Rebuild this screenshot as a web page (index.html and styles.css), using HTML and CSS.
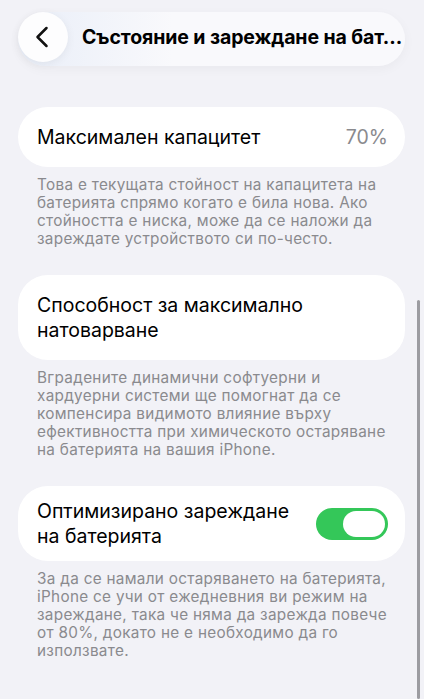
FILE: index.html
```html
<!DOCTYPE html>
<html lang="bg">
<head>
  <meta charset="UTF-8" />
  <meta name="viewport" content="width=device-width, initial-scale=1.0"/>
  <title>Състояние и зареждане на батерията</title>
  <link rel="stylesheet" href="styles.css">
</head>
<body>
  <header class="nav">
    <button class="back" aria-label="Назад">
      <svg width="14" height="22" viewBox="0 0 14 22">
        <path d="M11.5 2 L2.5 11 L11.5 20" fill="none" stroke="#111" stroke-width="2.5" stroke-linecap="round" stroke-linejoin="round"/>
      </svg>
    </button>
    <h1 class="title">Състояние и зареждане на бат...</h1>
  </header>

  <main class="content">
    <section class="group">
      <div class="card row">
        <span class="label">Максимален капацитет</span>
        <span class="value">70%</span>
      </div>
      <p class="note">Това е текущата стойност на капацитета на<br>батерията спрямо когато е била нова. Ако<br>стойността е ниска, може да се наложи да<br>зареждате устройството си по-често.</p>
    </section>

    <section class="group">
      <div class="card tall">
        <span class="label">Способност за максимално натоварване</span>
      </div>
      <p class="note">Вградените динамични софтуерни и<br>хардуерни системи ще помогнат да се<br>компенсира видимото влияние върху<br>ефективността при химическото остаряване<br>на батерията на вашия iPhone.</p>
    </section>

    <section class="group">
      <div class="card row toggle-row">
        <span class="label">Оптимизирано зареждане на батерията</span>
        <span class="switch on"><span class="knob"></span></span>
      </div>
      <p class="note">За да се намали остаряването на батерията,<br>iPhone се учи от ежедневния ви режим на<br>зареждане, така че няма да зарежда повече<br>от 80%, докато не е необходимо да го<br>използвате.</p>
    </section>
  </main>

  <div class="scrollbar"></div>
</body>
</html>
```

FILE: styles.css
```css
* {
  box-sizing: border-box;
}

body {
  margin: 0;
  height: 699px;
  overflow: hidden;
  position: relative;
  background: #f2f2f7;
  font-family: Inter, "Noto Sans", "Liberation Sans", sans-serif;
  color: #000;
}

/* top bar */
.nav {
  display: flex;
  align-items: center;
  height: 54px;
  margin: 12px 19px 0 18px;
  border-radius: 27px;
  background: linear-gradient(90deg, #e9eef8 0%, #f9f9fc 40%, #f9f9fc 100%);
  box-shadow: 0 3px 12px rgba(0, 0, 0, 0.04);
}

.back {
  flex: none;
  display: flex;
  align-items: center;
  justify-content: center;
  width: 50px;
  height: 50px;
  margin-top: -4px;
  padding: 0 3px 0 0;
  border: none;
  border-radius: 50%;
  background: #fdfdfe;
  box-shadow: 0 2px 10px rgba(0, 0, 0, 0.06);
}

.title {
  flex: 1;
  min-width: 0;
  margin: -4px 0 0 14px;
  font-size: 19.5px;
  font-weight: 700;
  letter-spacing: -0.1px;
  white-space: nowrap;
}

/* list */
.content {
  padding: 41px 19px 0 18px;
}

.group {
  margin-bottom: 27px;
}

.card {
  background: #fff;
  border-radius: 30px;
  padding: 0 17px 0 19px;
}

.row {
  display: flex;
  align-items: center;
  justify-content: space-between;
  gap: 20px;
  min-height: 60px;
}

.tall {
  padding-top: 18px;
  padding-bottom: 18px;
}

.toggle-row {
  padding-top: 13px;
  padding-bottom: 13px;
}

.label {
  font-size: 19.5px;
  line-height: 24.5px;
}

.value {
  font-size: 19.5px;
  color: #8a8a8e;
}

.note {
  margin: 9px 0 0;
  padding: 0 0 0 19px;
  font-size: 15.3px;
  line-height: 18px;
  letter-spacing: 0.3px;
  white-space: nowrap;
  color: #8a8a8e;
}

/* switch */
.switch {
  flex: none;
  display: flex;
  align-items: center;
  justify-content: flex-end;
  width: 72px;
  height: 32px;
  padding: 3px;
  border-radius: 16px;
  background: #34c759;
}

.knob {
  width: 42px;
  height: 26px;
  border-radius: 13px;
  background: #fff;
}

.scrollbar {
  position: absolute;
  right: 4px;
  top: 300px;
  bottom: 0;
  width: 3px;
  border-radius: 2px;
  background: #9c9ca1;
}
```
